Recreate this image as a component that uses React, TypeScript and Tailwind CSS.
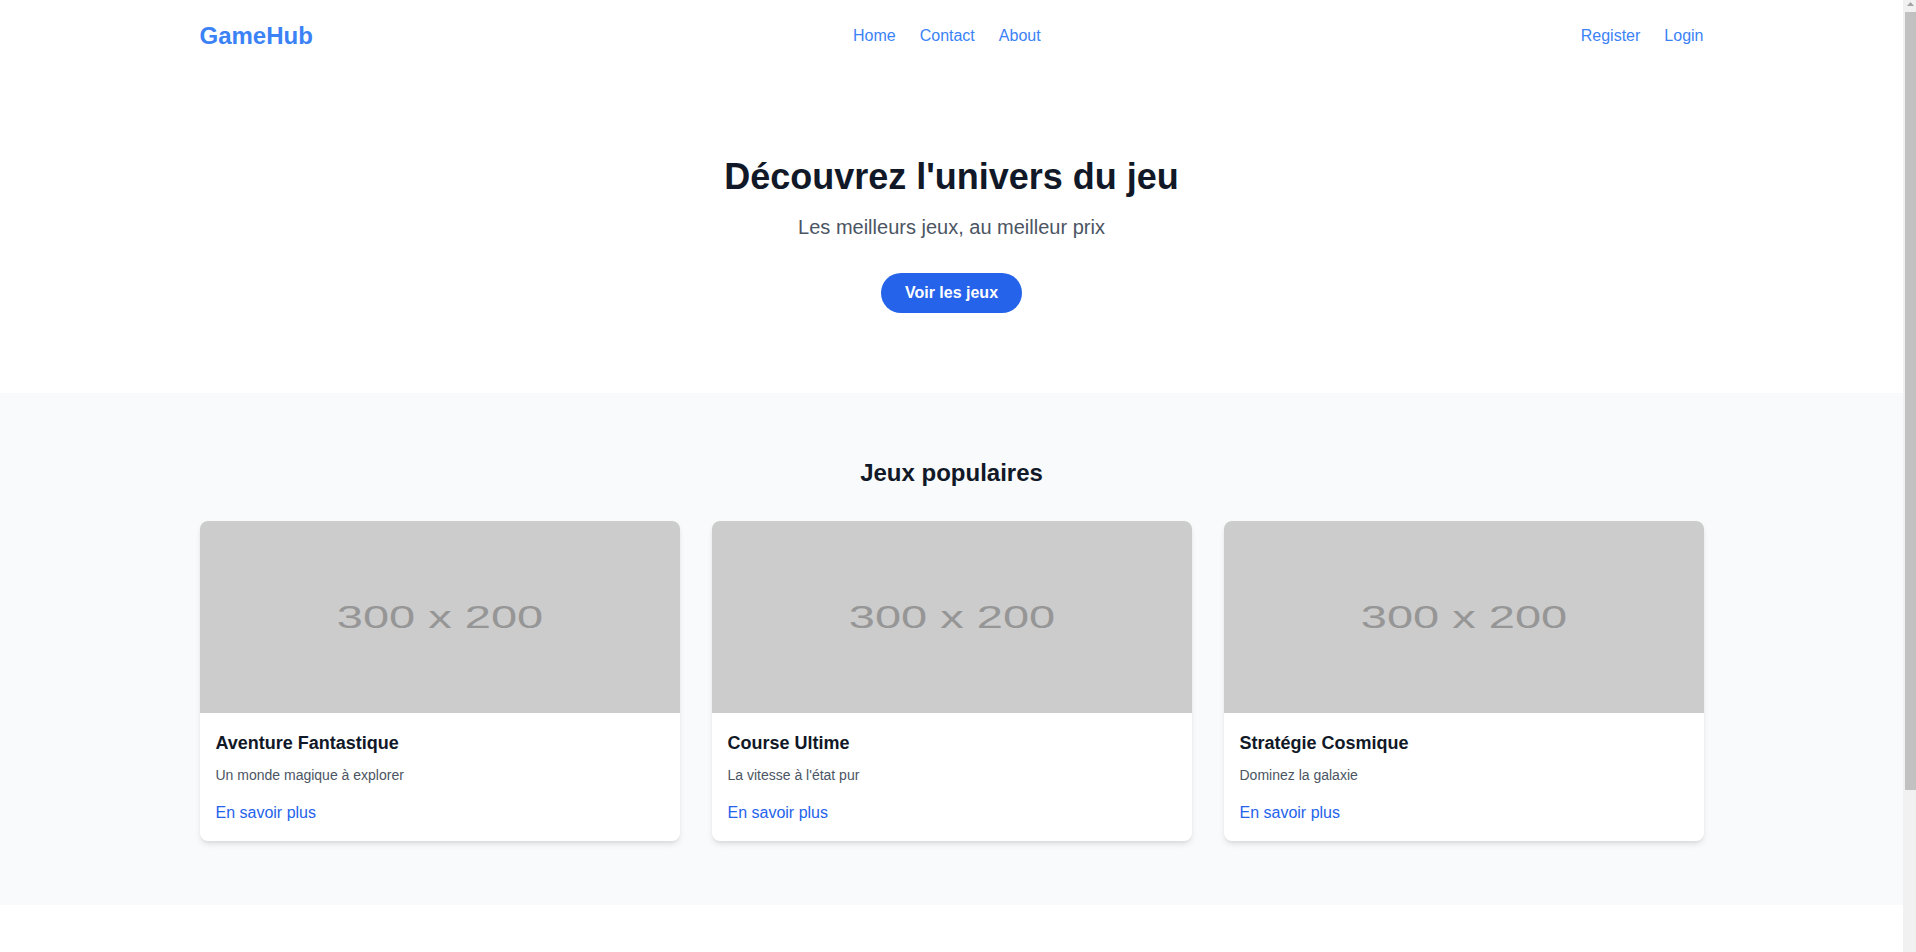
import React from "react";

const games = [
  { title: "Aventure Fantastique", description: "Un monde magique à explorer" },
  { title: "Course Ultime", description: "La vitesse à l'état pur" },
  { title: "Stratégie Cosmique", description: "Dominez la galaxie" },
];

const Placeholder: React.FC = () => (
  <svg
    className="block w-full h-48"
    viewBox="0 0 300 200"
    preserveAspectRatio="none"
  >
    <rect width="300" height="200" fill="#cccccc" />
    <text
      x="150"
      y="111"
      fill="#969696"
      fontSize="32"
      fontFamily="'Liberation Sans', Arial, sans-serif"
      textAnchor="middle"
      textLength="129"
      lengthAdjust="spacingAndGlyphs"
    >
      300 x 200
    </text>
  </svg>
);

// classic browser scrollbar, as seen in the screenshot
const ScrollBar: React.FC = () => (
  <div className="w-[13px] shrink-0 bg-[#f1f1f1] flex flex-col items-end">
    <div className="h-3 w-[11px] flex items-start justify-center pt-[2px]">
      <svg width="7" height="5" viewBox="0 0 7 5">
        <path d="M3.5 0 L7 4 L0 4 Z" fill="#a3a3a3" />
      </svg>
    </div>
    <div className="w-[11px] h-[778px] bg-[#c1c1c1]" />
  </div>
);

const App: React.FC<{}> = () => {
  return (
    <div className="flex h-screen overflow-hidden bg-white font-['Liberation_Sans',Arial,sans-serif]">
      <main className="flex-1 min-w-0 overflow-hidden">
        <nav className="container mx-auto px-4 py-5 flex justify-between items-center">
          <a href="#" className="text-2xl font-bold text-[#3b82f6]">
            GameHub
          </a>
          <div className="flex items-center gap-6">
            <a href="#" className="font-medium text-[#3b82f6]">
              Home
            </a>
            <a href="#" className="font-medium text-[#3b82f6]">
              Contact
            </a>
            <a href="#" className="font-medium text-[#3b82f6]">
              About
            </a>
          </div>
          <div className="flex items-center gap-6">
            <a href="#" className="font-medium text-[#3b82f6]">
              Register
            </a>
            <a href="#" className="font-medium text-[#3b82f6]">
              Login
            </a>
          </div>
        </nav>

        <section className="pt-[85px] pb-20 text-center">
          <h1 className="text-4xl font-bold text-[#111827] mb-4">
            Découvrez l'univers du jeu
          </h1>
          <p className="text-xl text-[#4b5563] mb-8">
            Les meilleurs jeux, au meilleur prix
          </p>
          <button className="bg-[#2563eb] text-white font-bold px-6 py-2 rounded-full">
            Voir les jeux
          </button>
        </section>

        <section className="bg-[#f9fafb] py-16">
          <div className="container mx-auto px-4">
            <h2 className="text-2xl font-bold text-[#111827] text-center mb-8">
              Jeux populaires
            </h2>
            <div className="grid grid-cols-3 gap-8">
              {games.map((game) => (
                <div
                  key={game.title}
                  className="bg-white rounded-lg shadow-md overflow-hidden"
                >
                  <Placeholder />
                  <div className="p-4">
                    <h3 className="text-lg font-bold text-[#111827] mb-2">
                      {game.title}
                    </h3>
                    <p className="text-sm text-[#4b5563] mb-4">
                      {game.description}
                    </p>
                    <a href="#" className="text-[#2563eb]">
                      En savoir plus
                    </a>
                  </div>
                </div>
              ))}
            </div>
          </div>
        </section>

        <footer className="h-[200px] bg-white"></footer>
      </main>
      <ScrollBar />
    </div>
  );
};

export default App;
